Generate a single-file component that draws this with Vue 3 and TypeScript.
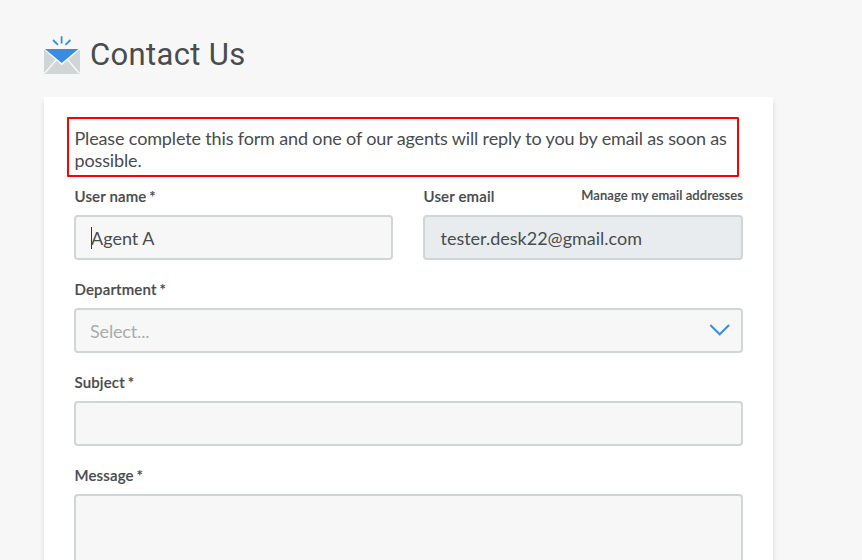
<script setup lang="ts">
import { ref } from 'vue'

const userName = ref<string>('Agent A')
const userEmail = ref<string>('tester.desk22@gmail.com')
</script>

<template>
  <main class="page">
    <header class="header">
      <svg class="mail" width="38" height="40" viewBox="0 0 38 40" fill="none">
        <path d="M1 15h36v24H1z" fill="#d0d5d5" />
        <path d="M1.5 38.5 14.5 23.5M36.5 38.5 23.5 23.5" stroke="#f7f7f7" stroke-width="1.5" />
        <path d="M0 13.5h38L18.7 30.2z" fill="#f7f7f7" />
        <path d="M2 14h33.4L18.7 28z" fill="#3a8dde" />
        <path d="M18.6 1.2v7.2M10 5l5 4.8M27.4 5l-5 4.8" stroke="#3a8dde" stroke-width="1.8" />
      </svg>
      <h1 class="title">Contact Us</h1>
    </header>
    <form class="card" @submit.prevent>
      <p class="notice">Please complete this form and one of our agents will reply to you by email as soon as possible.</p>
      <div class="pair">
        <section class="field">
          <div class="label-row"><span class="label">User name <i>*</i></span></div>
          <div class="control"><span class="caret"></span><span class="value">{{ userName }}</span></div>
        </section>
        <section class="field">
          <div class="label-row">
            <span class="label">User email</span>
            <a class="manage">Manage my email addresses</a>
          </div>
          <div class="control disabled"><span class="value">{{ userEmail }}</span></div>
        </section>
      </div>
      <section class="field">
        <div class="label-row"><span class="label">Department <i>*</i></span></div>
        <div class="control select">
          <span class="placeholder">Select...</span>
          <svg class="chevron" width="22" height="14" viewBox="0 0 22 14" fill="none">
            <path d="M1.3 1 10.7 10.3 20.1 1" stroke="#3a8dde" stroke-width="2" />
          </svg>
        </div>
      </section>
      <section class="field">
        <div class="label-row"><span class="label">Subject <i>*</i></span></div>
        <div class="control"></div>
      </section>
      <section class="field">
        <div class="label-row"><span class="label">Message <i>*</i></span></div>
        <div class="control message"></div>
      </section>
    </form>
  </main>
</template>

<style>
body {
  margin: 0;
  background: #f7f7f7;
}
</style>

<style scoped>
* {
  box-sizing: border-box;
}
.page {
  height: 560px;
  overflow: hidden;
  background: #f7f7f7;
  color: #494c4e;
  font-family: Lato, "Liberation Sans", sans-serif;
  font-size: 18px;
}
.header {
  display: flex;
  height: 97px;
  padding: 35px 0 0 43px;
}
.mail {
  flex: none;
}
.title {
  margin: 0 0 0 9px;
  font: 400 31px/40px Roboto, sans-serif;
  letter-spacing: 0.35px;
  white-space: nowrap;
}
.card {
  width: 729px;
  height: 600px;
  margin-left: 44px;
  padding: 20px 30px 0;
  background: #fff;
  box-shadow: 0 5px 5px rgba(0, 0, 0, 0.13);
}
.notice {
  width: 672px;
  height: 60px;
  margin: 0 0 0 -7px;
  padding: 8px 5px 0 5.5px;
  border: 2px solid #f00;
  border-radius: 1px;
  line-height: 22px;
  letter-spacing: -0.145px;
}
.pair {
  display: grid;
  grid-template-columns: 319px 320px;
  gap: 30px;
}
.field {
  height: 93px;
}
.label-row {
  display: flex;
  justify-content: space-between;
  height: 38px;
  padding-top: 9px;
}
.label {
  padding-left: 0.5px;
  font-size: 15px;
  font-weight: 600;
  line-height: 20px;
  letter-spacing: 0.15px;
  -webkit-text-stroke: 0.15px #494c4e;
}
.label i {
  margin-left: -1px;
  font-style: normal;
}
.manage {
  margin-top: 1px;
  font-size: 13px;
  font-weight: 600;
  line-height: 17px;
  letter-spacing: 0.07px;
  -webkit-text-stroke: 0.15px #494c4e;
}
.control {
  display: flex;
  align-items: center;
  height: 45px;
  padding: 0 15px;
  border: 2px solid #d0d5d5;
  border-radius: 4px;
  background: #f7f7f7;
}
.disabled {
  padding-left: 15.5px;
  background: #e8ecef;
}
.caret {
  width: 1px;
  height: 22px;
  margin-right: -1px;
  background: #333;
}
.select {
  justify-content: space-between;
  padding: 0 10px 0 14px;
}
.placeholder {
  color: #a8adad;
  letter-spacing: -0.15px;
}
.message {
  height: 140px;
}
</style>
